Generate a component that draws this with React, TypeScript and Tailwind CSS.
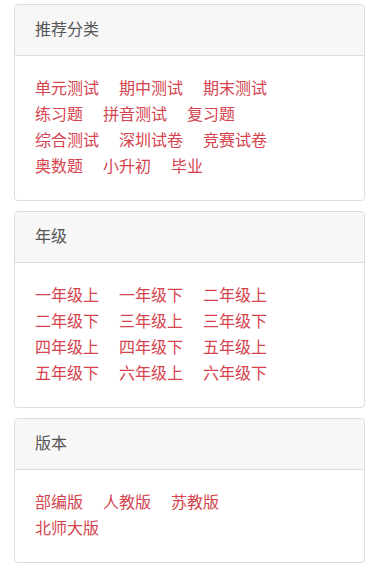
const sections: { title: string; rows: string[][] }[] = [
  {
    title: '推荐分类',
    rows: [
      ['单元测试', '期中测试', '期末测试'],
      ['练习题', '拼音测试', '复习题'],
      ['综合测试', '深圳试卷', '竞赛试卷'],
      ['奥数题', '小升初', '毕业'],
    ],
  },
  {
    title: '年级',
    rows: [
      ['一年级上', '一年级下', '二年级上'],
      ['二年级下', '三年级上', '三年级下'],
      ['四年级上', '四年级下', '五年级上'],
      ['五年级下', '六年级上', '六年级下'],
    ],
  },
  {
    title: '版本',
    rows: [
      ['部编版', '人教版', '苏教版'],
      ['北师大版'],
    ],
  },
]

function Panel({ title, rows }: { title: string; rows: string[][] }) {
  return (
    <div className="rounded-[4px] border border-[#dddddd] bg-white overflow-hidden">
      <div className="border-b border-[#dddddd] bg-[#f7f7f7] px-5 py-[13px] text-[16px] leading-6 text-[#555555]">
        {title}
      </div>
      <div className="px-5 py-5">
        {rows.map((row, i) => (
          <div key={i} className="flex gap-5 text-[16px] leading-[26px]">
            {row.map((item) => (
              <a key={item} href="#" className="text-[#d5434e] no-underline">
                {item}
              </a>
            ))}
          </div>
        ))}
      </div>
    </div>
  )
}

export default function App() {
  return (
    <div
      className="flex w-[379px] flex-col gap-[10px] bg-white px-[14px] pt-1 pb-5"
      style={{ fontFamily: '"Liberation Sans", "Noto Sans CJK SC", sans-serif' }}
    >
      {sections.map((s) => (
        <Panel key={s.title} title={s.title} rows={s.rows} />
      ))}
    </div>
  )
}
